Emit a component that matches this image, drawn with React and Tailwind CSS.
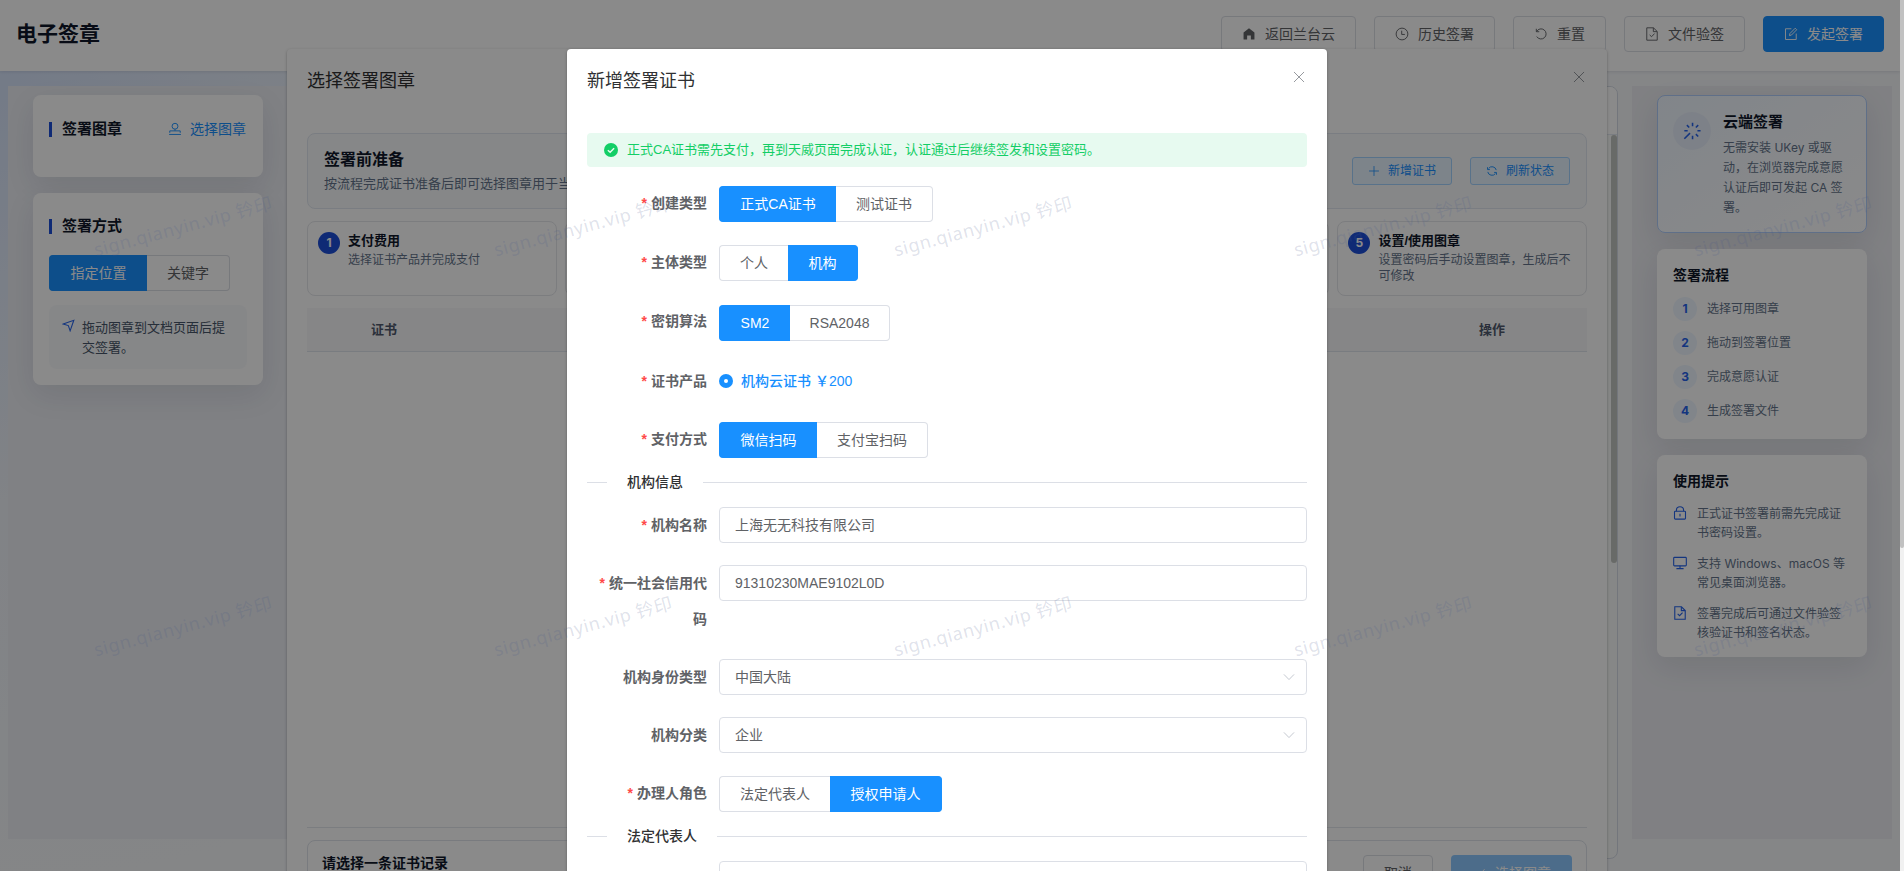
import React from 'react';
import clsx from 'clsx';

const Icon = ({ size = 14, className = '', children, strokeWidth = 68 }) => (
    <svg
        width={size}
        height={size}
        viewBox="0 0 1024 1024"
        fill="none"
        stroke="currentColor"
        strokeWidth={strokeWidth}
        className={clsx('shrink-0', className)}
    >
        {children}
    </svg>
);

const HomeIcon = () => (
    <Icon>
        <path d="M512 100 L910 400 V910 H650 V620 H374 V910 H114 V400 Z" fill="currentColor" stroke="none" />
    </Icon>
);

const ClockIcon = () => (
    <Icon>
        <circle cx="512" cy="512" r="430" />
        <path d="M490 270 V545 H720" />
    </Icon>
);

const ResetIcon = () => (
    <Icon>
        <path d="M190 330 A370 370 0 1 1 200 700" />
        <path d="M170 130 V345 H385" />
    </Icon>
);

const DocCheckIcon = ({ className, strokeWidth }) => (
    <Icon className={className} strokeWidth={strokeWidth}>
        <path d="M130 60 H620 L894 330 V964 H130 Z" />
        <path d="M610 70 V340 H884" />
        <path d="M340 580 L480 710 L700 480" />
    </Icon>
);

const EditIcon = () => (
    <Icon>
        <path d="M540 130 H110 V914 H894 V480" />
        <path d="M400 630 L430 480 L820 90 L930 200 L545 590 Z" />
    </Icon>
);

const StampIcon = () => (
    <Icon>
        <path d="M512 640 V520" />
        <circle cx="512" cy="310" r="215" />
        <path d="M130 790 V650 H894 V790 M80 910 H944" />
    </Icon>
);

const PositionIcon = () => (
    <Icon size={13} className="text-[#2563eb]" strokeWidth={84}>
        <path d="M90 400 L930 100 L640 930 L500 520 Z" />
    </Icon>
);

const PlusIcon = () => (
    <Icon size={12}>
        <path d="M512 90 V934 M90 512 H934" />
    </Icon>
);

const RefreshIcon = () => (
    <Icon size={12} strokeWidth={80}>
        <path d="M150 590 A370 370 0 0 0 800 740 M874 434 A370 370 0 0 0 224 284" />
        <path d="M130 190 V390 H330 M894 834 V634 H694" />
    </Icon>
);

const CloseIcon = () => (
    <Icon size={16} strokeWidth={60} className="text-[#909399]">
        <path d="M190 190 L834 834 M834 190 L190 834" />
    </Icon>
);

const MagicIcon = () => (
    <Icon size={20} className="text-[#2563eb]" strokeWidth={80}>
        <path d="M120 910 L410 620" />
        <path d="M540 90 V270 M540 760 V930 M120 500 H290 M790 500 H950 M250 210 L370 330 M830 210 L710 330 M710 670 L830 790" />
    </Icon>
);

const LockIcon = () => (
    <Icon className="text-[#2563eb]" strokeWidth={80}>
        <rect x="110" y="380" width="804" height="580" rx="60" />
        <path d="M250 380 V310 A262 250 0 0 1 774 310 V380 M512 570 V760" />
    </Icon>
);

const MonitorIcon = () => (
    <Icon className="text-[#2563eb]" strokeWidth={80}>
        <rect x="50" y="100" width="924" height="620" rx="60" />
        <path d="M512 720 V900 M250 920 H774" />
    </Icon>
);

const ChevronIcon = () => (
    <Icon className="text-[#c0c4cc]">
        <path d="M140 320 L512 700 L884 320" />
    </Icon>
);

const CheckIcon = () => (
    <Icon>
        <path d="M100 540 L400 830 L920 230" />
    </Icon>
);

const HeaderButton = ({ icon, children, primary }) => (
    <button
        className={clsx(
            'flex h-9 items-center gap-[9px] rounded border px-5 text-sm',
            primary ? 'border-[#1890ff] bg-[#1890ff] text-white' : 'border-[#dcdfe6] bg-white text-[#606266]'
        )}
    >
        {icon}
        <span>{children}</span>
    </button>
);

const SmallButton = ({ icon, children }) => (
    <button className="flex h-7 items-center gap-2 rounded-[3px] border border-[#a3d3ff] bg-[#e8f4ff] px-[15px] text-xs text-[#1890ff]">
        {icon}
        <span>{children}</span>
    </button>
);

const RadioGroup = ({ options, active, widths }) => (
    <div className="flex h-9 text-sm">
        {options.map((option, i) => (
            <div
                key={option}
                style={{ width: widths[i] }}
                className={clsx(
                    'flex items-center justify-center border-y',
                    i === 0 ? 'rounded-l border-l' : 'rounded-r border-r',
                    i === active ? 'border-[#1890ff] bg-[#1890ff] text-white' : 'border-[#dcdfe6] bg-white text-[#606266]'
                )}
            >
                {option}
            </div>
        ))}
    </div>
);

const SideTitle = ({ children }) => (
    <div className="flex items-center gap-2.5">
        <span className="h-[15px] w-[3px] bg-[#1d4ed8]" />
        <span className="text-[15px] font-bold leading-5 text-[#0f172a]">{children}</span>
    </div>
);

const LeftPanel = () => (
    <aside className="flex h-[753px] w-[280px] shrink-0 flex-col gap-4 bg-[#eceef4] px-[25px] pt-[9px]">
        <div className="flex h-[82px] items-start justify-between rounded-lg bg-white pl-4 pr-[17px] pt-6 shadow-[0_10px_30px_rgba(15,23,42,0.09)]">
            <SideTitle>签署图章</SideTitle>
            <div className="flex items-center gap-2 text-sm leading-5 text-[#1890ff]">
                <StampIcon />
                选择图章
            </div>
        </div>
        <div className="h-48 rounded-lg bg-white px-4 pt-[23px] shadow-[0_10px_30px_rgba(15,23,42,0.09)]">
            <SideTitle>签署方式</SideTitle>
            <div className="mt-[19px]">
                <RadioGroup options={['指定位置', '关键字']} active={0} widths={[98, 83]} />
            </div>
            <div className="mt-3.5 flex h-16 gap-[7px] rounded-lg bg-[#f8fafc] pl-[13px] pt-[13px]">
                <div className="pt-px">
                    <PositionIcon />
                </div>
                <p className="w-[146px] text-[13px] leading-5 text-[#475569]">拖动图章到文档页面后提交签署。</p>
            </div>
        </div>
    </aside>
);

const flow = ['选择可用图章', '拖动到签署位置', '完成意愿认证', '生成签署文件'];

const tips = [
    { icon: <LockIcon />, text: '正式证书签署前需先完成证书密码设置。' },
    { icon: <MonitorIcon />, text: '支持 Windows、macOS 等常见桌面浏览器。' },
    { icon: <DocCheckIcon className="text-[#2563eb]" strokeWidth={80} />, text: '签署完成后可通过文件验签核验证书和签名状态。' },
];

const RightPanel = () => (
    <aside className="flex h-[753px] w-[260px] shrink-0 flex-col gap-4 bg-[#ecedf2] px-[25px] pt-[9px] font-['Inter','Noto_Sans_CJK_SC',sans-serif] text-xs text-[#64748b]">
        <div className="flex h-[138px] gap-3 rounded-lg border border-[#b0cdfb] bg-linear-to-br from-[#eff6ff] to-white pl-[15px] pt-[15px] shadow-[0_10px_30px_rgba(15,23,42,0.09)]">
            <div className="mt-px flex size-[38px] shrink-0 items-center justify-center rounded-full bg-[#e8effc]">
                <MagicIcon />
            </div>
            <div>
                <div className="text-[15px] font-bold leading-[22px] text-[#0f172a]">云端签署</div>
                <p className="mt-[5px] w-[124px] leading-5">
                    无需安装 UKey 或驱
                    <br />
                    动，在浏览器完成意愿认证后即可发起 CA 签署。
                </p>
            </div>
        </div>
        <div className="h-[190px] rounded-lg bg-white px-4 pt-4 shadow-[0_10px_30px_rgba(15,23,42,0.09)]">
            <div className="text-sm font-bold leading-5 text-[#0f172a]">签署流程</div>
            <div className="mt-3 flex flex-col gap-2.5">
                {flow.map((item, i) => (
                    <div key={item} className="flex h-6 items-center gap-2.5">
                        <span className="flex size-6 items-center justify-center rounded-full bg-[#eff6ff] font-bold text-[#2563eb]">
                            {i + 1}
                        </span>
                        {item}
                    </div>
                ))}
            </div>
        </div>
        <div className="h-[202px] rounded-lg bg-white px-4 pt-4 shadow-[0_10px_30px_rgba(15,23,42,0.09)]">
            <div className="text-sm font-bold leading-5 text-[#0f172a]">使用提示</div>
            <div className="mt-[13px] flex flex-col gap-3">
                {tips.map((tip) => (
                    <div key={tip.text} className="flex gap-2.5">
                        <div className="pt-0.5">{tip.icon}</div>
                        <p className="w-[150px] leading-[19px]">{tip.text}</p>
                    </div>
                ))}
            </div>
        </div>
    </aside>
);

const steps = [
    { title: '支付费用', desc: '选择证书产品并完成支付' },
    { title: '', desc: '' },
    { title: '', desc: '' },
    { title: '', desc: '' },
    { title: '设置/使用图章', desc: '设置密码后手动设置图章，生成后不可修改' },
];

const SealDialog = () => (
    <div className="flex h-[900px] w-[1320px] flex-col rounded-sm bg-white px-5 shadow-[0_1px_3px_rgba(0,0,0,0.3)]">
        <div className="flex h-[84px] shrink-0 items-start justify-between">
            <span className="pt-5 text-lg leading-6 text-[#303133]">选择签署图章</span>
            <span className="pt-5">
                <CloseIcon />
            </span>
        </div>
        <div className="flex h-[76px] shrink-0 items-center justify-between rounded-lg border border-[#e2e8f0] bg-[#f8fafc] px-4">
            <div>
                <div className="text-base font-bold leading-6 text-[#0f172a]">签署前准备</div>
                <div className="mt-0.5 text-[13px] leading-5 text-[#64748b]">按流程完成证书准备后即可选择图章用于当前签署</div>
            </div>
            <div className="flex gap-[18px]">
                <SmallButton icon={<PlusIcon />}>新增证书</SmallButton>
                <SmallButton icon={<RefreshIcon />}>刷新状态</SmallButton>
            </div>
        </div>
        <div className="mt-3 grid shrink-0 grid-cols-5 gap-2">
            {steps.map((step, i) => (
                <div key={i} className="flex h-[75px] gap-2 rounded-lg border border-[#e5e7eb] px-2.5 pt-2.5">
                    <span className="flex size-[22px] shrink-0 items-center justify-center rounded-full bg-[#1d4ed8] font-['Inter',sans-serif] text-xs font-bold text-white">
                        {i + 1}
                    </span>
                    <div className="min-w-0">
                        <div className="text-[13px] font-bold leading-[18px] text-[#0f172a]">{step.title}</div>
                        <div className="mt-0.5 text-xs leading-4 text-[#64748b]">{step.desc}</div>
                    </div>
                </div>
            ))}
        </div>
        <div className="mt-3 flex h-11 shrink-0 items-center justify-between border-b border-[#dfe6ec] bg-[#f8f8f9] pl-16 pr-[82px] text-[13px] font-bold text-[#515a6e]">
            <span>证书</span>
            <span>操作</span>
        </div>
        <div className="h-[475px] shrink-0" />
        <div className="h-px shrink-0 bg-[#e4e7ed]" />
        <div className="mt-3 flex h-[90px] shrink-0 items-start justify-between rounded-lg border border-[#dfe3ea] px-3.5 pt-3.5">
            <span className="-mt-px text-sm font-bold leading-[18px] text-[#0f172a]">请选择一条证书记录</span>
            <div className="flex gap-[18px]">
                <button className="h-9 w-[70px] rounded border border-[#dcdfe6] text-sm text-[#606266]">取消</button>
                <button className="flex h-9 items-center gap-[9px] rounded bg-[#8cc8ff] px-[21px] text-sm text-white">
                    <CheckIcon />
                    选择图章
                </button>
            </div>
        </div>
    </div>
);

const FormItem = ({ label, required, className, children }) => (
    <div className={clsx('flex', className)}>
        <div className="w-[132px] shrink-0 pr-3 text-right text-sm font-bold leading-9 text-[#606266]">
            {required && <span className="mr-1 text-[#ff4949]">*</span>}
            {label}
        </div>
        <div className="flex-1">{children}</div>
    </div>
);

const Field = ({ value, select }) => (
    <div className="flex h-9 items-center justify-between rounded border border-[#dcdfe6] bg-white pl-[15px] pr-2.5 text-sm text-[#606266]">
        <span>{value}</span>
        {select && <ChevronIcon />}
    </div>
);

const Divider = ({ children }) => (
    <div className="my-6 flex h-px items-center">
        <span className="h-px w-5 bg-[#dcdfe6]" />
        <span className="px-5 pb-0.5 text-sm font-medium text-[#303133]">{children}</span>
        <span className="h-px flex-1 bg-[#dcdfe6]" />
    </div>
);

const CertDialog = () => (
    <div className="h-[1200px] w-[760px] rounded-sm bg-white px-5 shadow-[0_1px_3px_rgba(0,0,0,0.3)]">
        <div className="flex h-[84px] items-start justify-between">
            <span className="pt-5 text-lg leading-6 text-[#303133]">新增签署证书</span>
            <span className="pt-5">
                <CloseIcon />
            </span>
        </div>
        <div className="flex h-[34px] items-center gap-[9px] rounded bg-[#e7faf0] pl-[17px] text-[13px] text-[#13ce66]">
            <Icon strokeWidth={110}>
                <circle cx="512" cy="512" r="512" fill="currentColor" stroke="none" />
                <path d="M280 530 L450 680 L740 390" stroke="#e7faf0" />
            </Icon>
            正式CA证书需先支付，再到天威页面完成认证，认证通过后继续签发和设置密码。
        </div>

        {/* Certificate options */}
        <FormItem label="创建类型" required className="mt-[18px] h-[59px]">
            <div className="pt-px">
                <RadioGroup options={['正式CA证书', '测试证书']} active={0} widths={[117, 97]} />
            </div>
        </FormItem>
        <FormItem label="主体类型" required className="h-[59px]">
            <div className="pt-px">
                <RadioGroup options={['个人', '机构']} active={1} widths={[69, 70]} />
            </div>
        </FormItem>
        <FormItem label="密钥算法" required className="h-[60px]">
            <div className="pt-0.5">
                <RadioGroup options={['SM2', 'RSA2048']} active={0} widths={[71, 100]} />
            </div>
        </FormItem>
        <FormItem label="证书产品" required className="h-[58px]">
            <div className="flex h-9 items-center gap-2 text-sm font-medium text-[#1890ff]">
                <span className="-mt-px flex size-3.5 items-center justify-center rounded-full bg-[#1890ff]">
                    <span className="size-1 rounded-full bg-white" />
                </span>
                <span>机构云证书</span>
                <span className="-ml-1">￥200</span>
            </div>
        </FormItem>
        <FormItem label="支付方式" required className="h-[37px]">
            <div className="pt-px">
                <RadioGroup options={['微信扫码', '支付宝扫码']} active={0} widths={[98, 111]} />
            </div>
        </FormItem>

        <Divider>机构信息</Divider>
        <FormItem label="机构名称" required className="mb-[22px]">
            <Field value="上海无无科技有限公司" />
        </FormItem>
        <FormItem label="统一社会信用代码" required className="mb-[22px]">
            <Field value="91310230MAE9102L0D" />
        </FormItem>
        <FormItem label="机构身份类型" className="mb-[22px]">
            <Field value="中国大陆" select />
        </FormItem>
        <FormItem label="机构分类" className="mb-[22px]">
            <Field value="企业" select />
        </FormItem>
        <FormItem label="办理人角色" required className="h-[37px]">
            <div className="pt-px">
                <RadioGroup options={['法定代表人', '授权申请人']} active={1} widths={[111, 112]} />
            </div>
        </FormItem>

        <Divider>法定代表人</Divider>
        <FormItem label="" className="mb-[22px]">
            <Field value="" />
        </FormItem>
    </div>
);

const Watermark = () => (
    <div className="pointer-events-none absolute left-[-17px] top-[26px] grid w-[2000px] grid-cols-5">
        {Array.from({ length: 10 }, (_, i) => (
            <div key={i} className="flex h-[400px] items-center justify-center">
                <span className="-rotate-15 whitespace-nowrap font-['Noto_Sans','Noto_Sans_CJK_SC',sans-serif] text-lg tracking-[0.6px] text-[#46588a]/18">
                    sign.qianyin.vip 钤印
                </span>
            </div>
        ))}
    </div>
);

const App = () => {
    return (
        <div className="relative h-[871px] w-[1904px] overflow-hidden bg-[#f1f1f1] font-['Liberation_Sans','Noto_Sans_CJK_SC',sans-serif]">
            {/* Page */}
            <div className="flex h-full w-[1900px] flex-col bg-[radial-gradient(circle_at_0_80px,#d6e3fa_0,#eef2f8_420px,#f5f7fa_800px)]">
                <header className="flex h-[71px] shrink-0 items-start justify-between bg-white pl-4 pr-4 pt-4 shadow-[0_1px_3px_rgba(15,23,42,0.1)]">
                    <h1 className="pt-1 text-[21px] font-bold leading-7 text-[#0f172a]">电子签章</h1>
                    <div className="flex gap-[18px]">
                        <HeaderButton icon={<HomeIcon />}>返回兰台云</HeaderButton>
                        <HeaderButton icon={<ClockIcon />}>历史签署</HeaderButton>
                        <HeaderButton icon={<ResetIcon />}>重置</HeaderButton>
                        <HeaderButton icon={<DocCheckIcon />}>文件验签</HeaderButton>
                        <HeaderButton icon={<EditIcon />} primary>
                            发起签署
                        </HeaderButton>
                    </div>
                </header>
                <main className="flex flex-1 items-start gap-3.5 px-2 pt-[15px]">
                    <LeftPanel />
                    <section className="h-[773px] flex-1 overflow-hidden rounded-lg border border-[#d5dbe5] bg-[#f8faf9]">
                        <div className="h-12 border-b border-[#e2e8f0] bg-white" />
                        <div className="flex justify-end">
                            <div className="h-[428px] w-1.5 rounded-full bg-[#c1c4c1]" />
                        </div>
                    </section>
                    <RightPanel />
                </main>
            </div>

            {/* Seal selection dialog */}
            <div className="absolute inset-y-0 left-0 flex w-[1894px] items-start justify-center overflow-hidden pt-[49px]">
                <SealDialog />
            </div>

            {/* New certificate dialog */}
            <div className="absolute inset-y-0 left-0 flex w-[1900px] items-start justify-center overflow-hidden bg-black/46 pt-[49px]">
                <div className="pr-1.5">
                    <CertDialog />
                </div>
            </div>

            <Watermark />

            {/* Window scrollbar */}
            <div className="absolute right-0 top-0 h-full w-1 bg-[#f1f1f1]">
                <div className="h-[548px] rounded-b-full bg-[#c1c1c1]" />
            </div>
        </div>
    );
};

export default App;
